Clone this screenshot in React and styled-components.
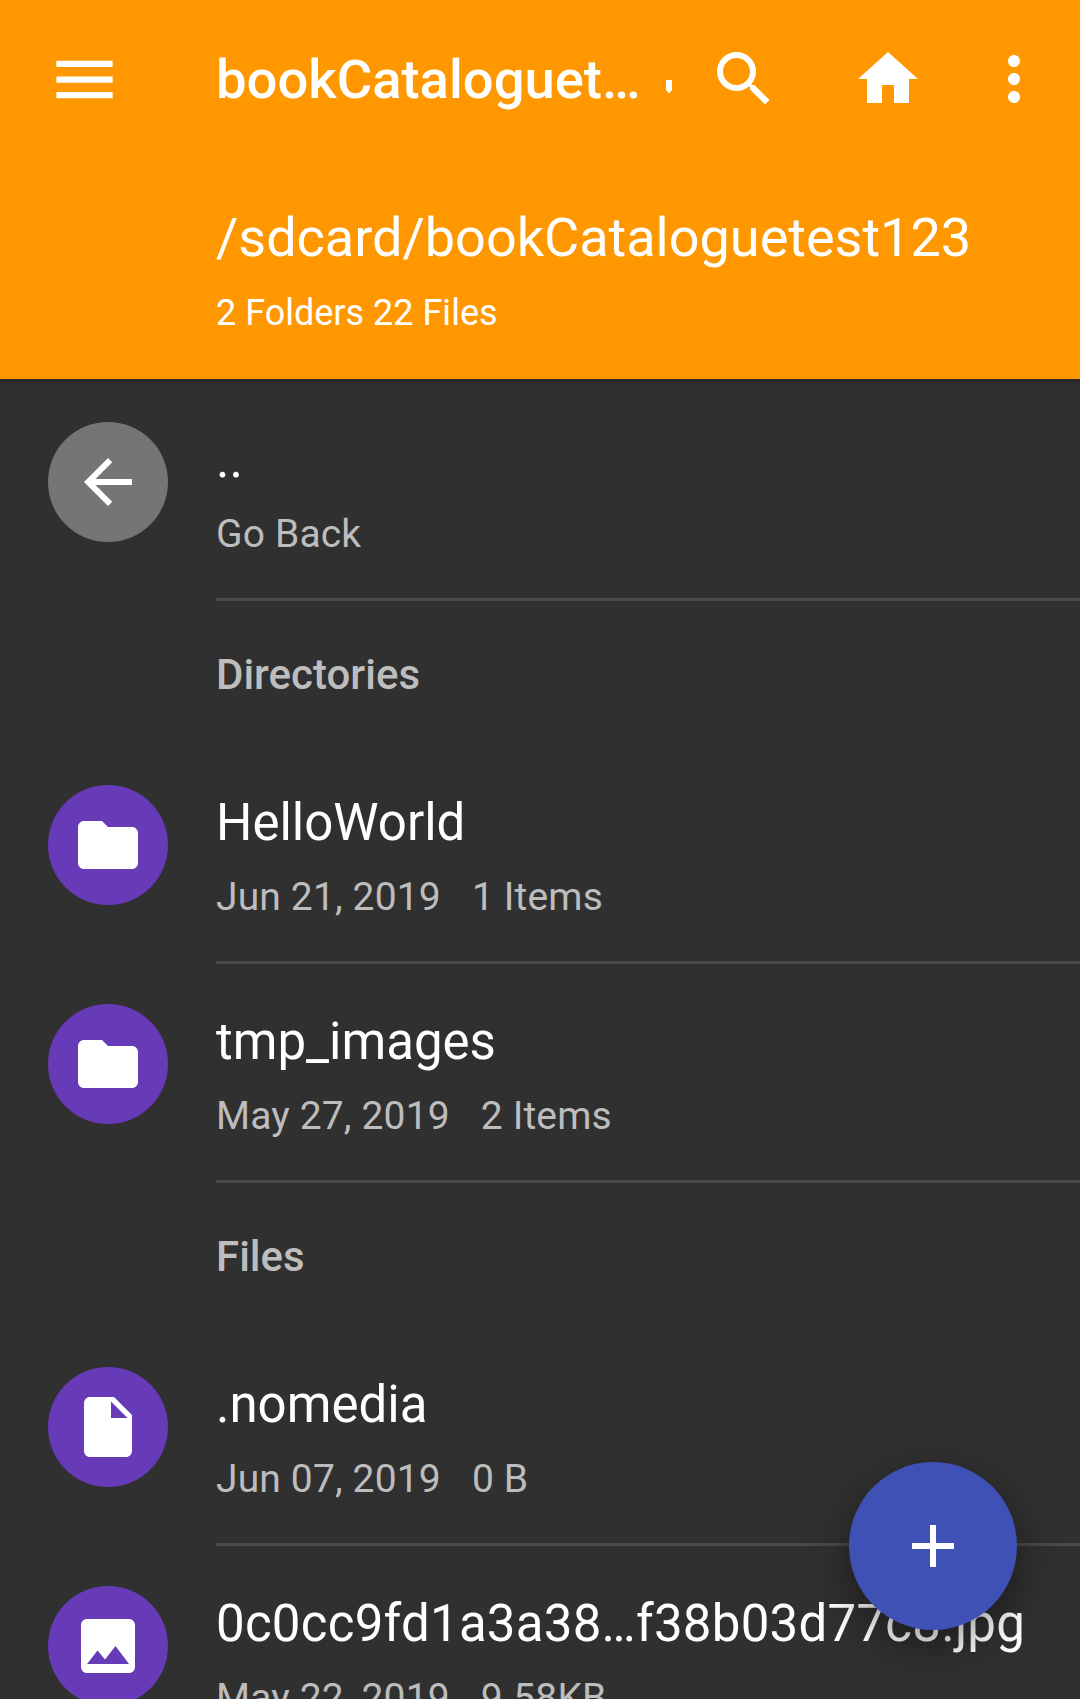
import React from 'react';
import styled, { createGlobalStyle } from 'styled-components';
import {
  MdMenu,
  MdSearch,
  MdHome,
  MdMoreVert,
  MdArrowBack,
  MdFolder,
  MdInsertDriveFile,
  MdImage,
  MdAdd,
} from 'react-icons/md';

const GlobalStyle = createGlobalStyle`
  html, body {
    margin: 0;
    padding: 0;
    background: #303030;
    font-family: Roboto, "Liberation Sans", sans-serif;
  }
`;

const Page = styled.div`
  position: relative;
  width: 1080px;
  height: 1699px;
  overflow: hidden;
  background: #303030;
`;

const Header = styled.header`
  height: 379px;
  background: #ff9800;
  color: #fff;
  box-shadow: 0 2px 4px rgba(0, 0, 0, 0.25);
  position: relative;
`;

const Toolbar = styled.div`
  display: flex;
  align-items: center;
  height: 158px;
`;

const IconSlot = styled.div`
  display: flex;
  align-items: center;
  justify-content: center;
  flex: none;
  width: ${(p) => p.$width}px;
  height: 158px;
`;

const Title = styled.div`
  flex: none;
  width: 450px;
  margin-left: 48px;
  font-size: 54.4px;
  font-weight: 500;
  white-space: nowrap;
`;

const Tick = styled.div`
  flex: none;
  width: 6px;
  height: 14px;
  margin-top: 15px;
  background: #fff;
  clip-path: polygon(0 0, 100% 0, 100% 75%, 50% 100%, 0 75%);
`;

const PathBlock = styled.div`
  padding-left: 216px;
`;

const PathText = styled.div`
  font-size: 54px;
  line-height: 66px;
  margin-top: 47px;
  white-space: nowrap;
`;

const Counts = styled.div`
  font-size: 36px;
  line-height: 42px;
  margin-top: 21px;
`;

const List = styled.div`
  padding-top: 3px;
`;

const Row = styled.div`
  display: flex;
  height: 219px;
  box-sizing: border-box;
  padding: 40px 0 0 48px;
`;

const Avatar = styled.div`
  flex: none;
  display: flex;
  align-items: center;
  justify-content: center;
  width: 120px;
  height: 120px;
  border-radius: 50%;
  background: ${(p) => p.$color};
  color: #fff;
`;

const RowBody = styled.div`
  flex: 1;
  min-width: 0;
  margin-left: 48px;
  border-bottom: 3px solid #494949;
  padding-top: 8px;
`;

const Primary = styled.div`
  font-size: 51px;
  line-height: 60px;
  letter-spacing: ${(p) => p.$tracking || 0}px;
  color: #fff;
  white-space: nowrap;
`;

const Secondary = styled.div`
  display: flex;
  gap: 31px;
  margin-top: 21px;
  font-size: 39px;
  line-height: 46px;
  letter-spacing: 0.15px;
  color: #bdbdbd;
  white-space: nowrap;
`;

const SectionHeader = styled.div`
  height: 144px;
  box-sizing: border-box;
  padding: 51px 0 0 216px;
  font-size: 42px;
  line-height: 46px;
  font-weight: 500;
  color: #bdbdbd;
`;

const Fab = styled.button`
  position: absolute;
  right: 63px;
  bottom: 69px;
  display: flex;
  align-items: center;
  justify-content: center;
  width: 168px;
  height: 168px;
  padding: 0;
  border: 0;
  border-radius: 50%;
  background: #3f51b5;
  color: #fff;
  box-shadow: 0 14px 42px rgba(0, 0, 0, 0.42);
`;

const directories = [
  { name: 'HelloWorld', date: 'Jun 21, 2019', info: '1 Items' },
  { name: 'tmp_images', date: 'May 27, 2019', info: '2 Items' },
];

const files = [
  { name: '.nomedia', date: 'Jun 07, 2019', info: '0 B', Icon: MdInsertDriveFile },
  {
    name: '0c0cc9fd1a3a38…f38b03d77c8.jpg',
    date: 'May 22, 2019',
    info: '9.58KB',
    Icon: MdImage,
    tracking: 0.25,
  },
];

const ListRow = ({ Icon, color, name, date, info, tracking }) => (
  <Row>
    <Avatar $color={color}>
      <Icon size={72} />
    </Avatar>
    <RowBody>
      <Primary $tracking={tracking}>{name}</Primary>
      <Secondary>
        <span>{date}</span>
        {info && <span>{info}</span>}
      </Secondary>
    </RowBody>
  </Row>
);

const App = () => {
  return (
    <Page>
      <GlobalStyle />
      <Header>
        <Toolbar>
          <IconSlot $width={168}>
            <MdMenu size={75} />
          </IconSlot>
          <Title>bookCataloguet…</Title>
          <Tick />
          <IconSlot $width={143}>
            <MdSearch size={72} />
          </IconSlot>
          <IconSlot $width={145}>
            <MdHome size={72} />
          </IconSlot>
          <IconSlot $width={108}>
            <MdMoreVert size={72} />
          </IconSlot>
        </Toolbar>
        <PathBlock>
          <PathText>/sdcard/bookCataloguetest123</PathText>
          <Counts>2 Folders 22 Files</Counts>
        </PathBlock>
      </Header>

      <List>
        <ListRow Icon={MdArrowBack} color="#757575" name=".." date="Go Back" />

        <SectionHeader>Directories</SectionHeader>
        {directories.map((dir) => (
          <ListRow key={dir.name} Icon={MdFolder} color="#673ab7" {...dir} />
        ))}

        <SectionHeader>Files</SectionHeader>
        {files.map((file) => (
          <ListRow key={file.name} color="#673ab7" {...file} />
        ))}
      </List>

      <Fab>
        <MdAdd size={72} />
      </Fab>
    </Page>
  );
};

export default App;
